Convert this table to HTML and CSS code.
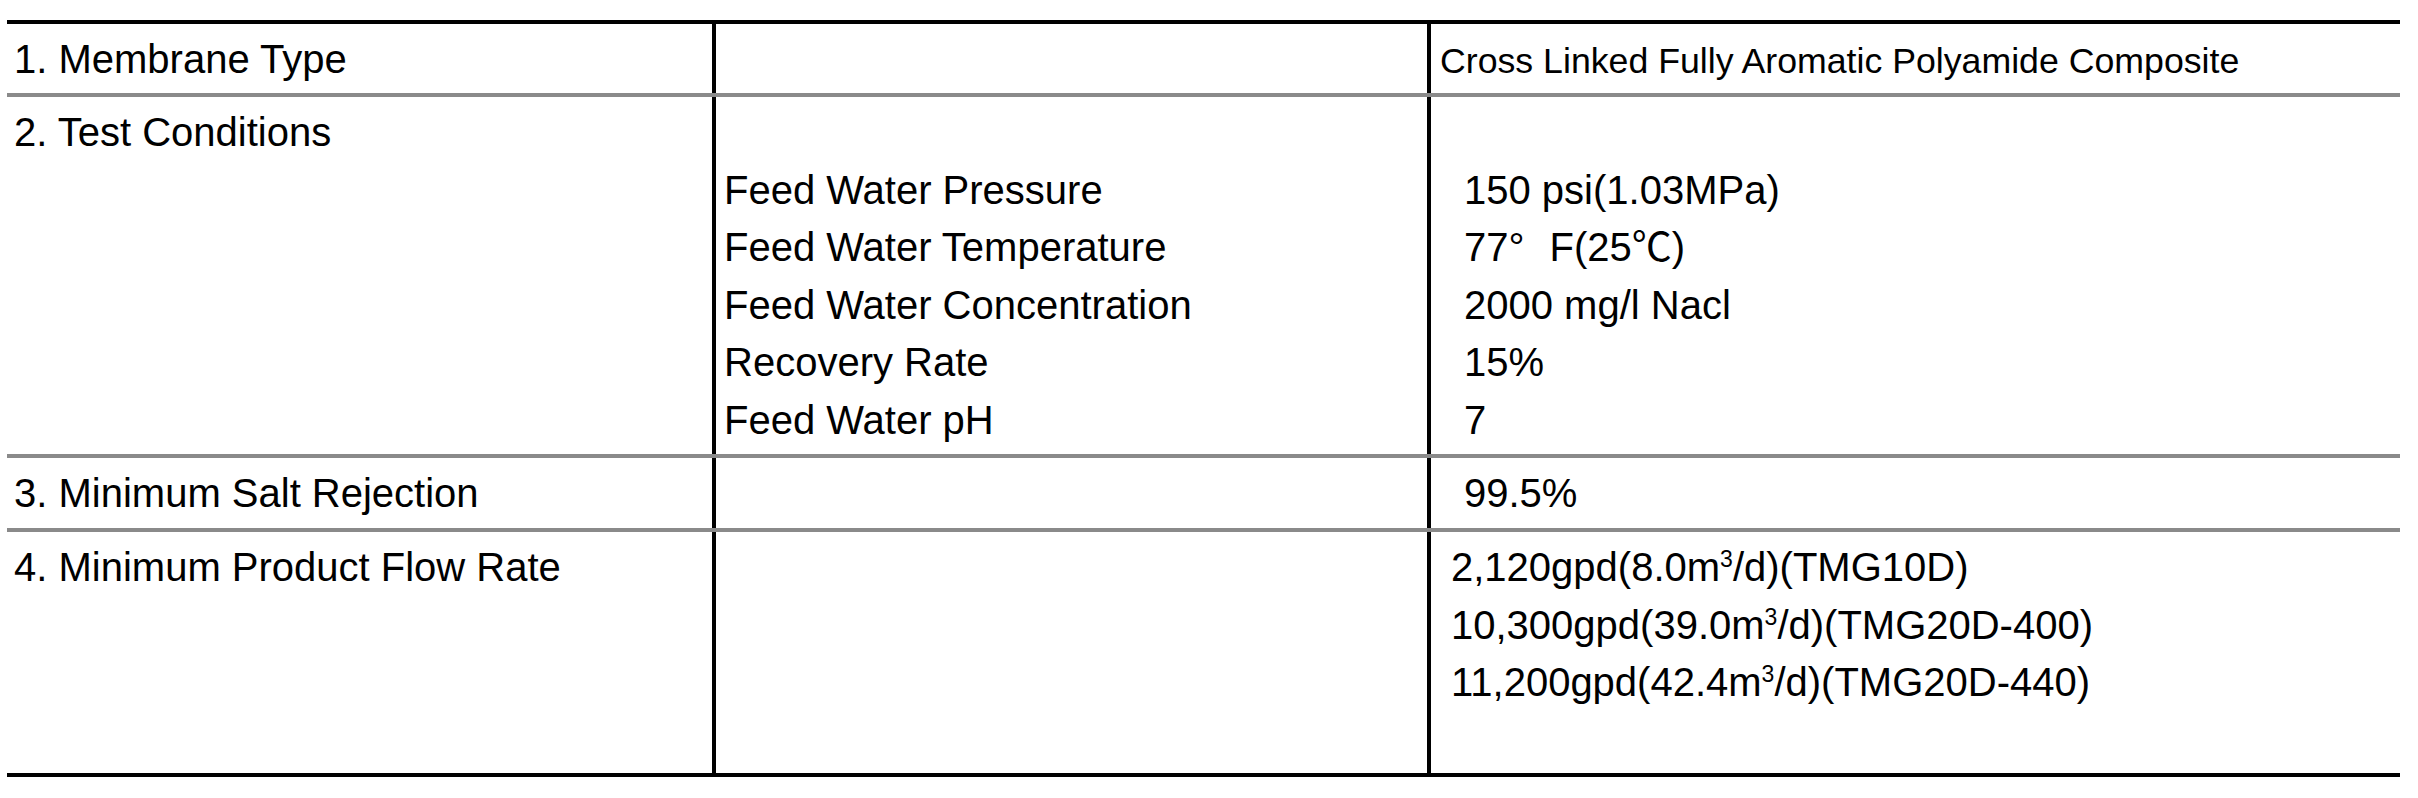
FILE: index.html
```html
<!DOCTYPE html>
<html lang="en">
<head>
<meta charset="utf-8">
<title>Membrane Specification</title>
<link rel="stylesheet" href="styles.css">
</head>
<body>
<div class="sheet">
  <div class="spec">
    <div class="row r1">
      <div class="cell c1">1. Membrane Type</div>
      <div class="cell c2"></div>
      <div class="cell c3"><span class="small">Cross Linked Fully Aromatic Polyamide Composite</span></div>
    </div>
    <div class="row r2">
      <div class="cell c1">2. Test Conditions</div>
      <div class="cell c2 lead">
        <div>Feed Water Pressure</div>
        <div>Feed Water Temperature</div>
        <div>Feed Water Concentration</div>
        <div>Recovery Rate</div>
        <div>Feed Water pH</div>
      </div>
      <div class="cell c3 lead">
        <div class="ind2">150 psi(1.03MPa)</div>
        <div class="ind2">77<span class="deg">°</span>F(25<span class="cjk">℃</span>)</div>
        <div class="ind2">2000 mg/l Nacl</div>
        <div class="ind2">15%</div>
        <div class="ind2">7</div>
      </div>
    </div>
    <div class="row r3">
      <div class="cell c1">3. Minimum Salt Rejection</div>
      <div class="cell c2"></div>
      <div class="cell c3"><div class="ind2">99.5%</div></div>
    </div>
    <div class="row r4">
      <div class="cell c1">4. Minimum Product Flow Rate</div>
      <div class="cell c2"></div>
      <div class="cell c3">
        <div class="ind1">2,120gpd(8.0m<span class="sup">3</span>/d)(TMG10D)</div>
        <div class="ind1">10,300gpd(39.0m<span class="sup">3</span>/d)(TMG20D-400)</div>
        <div class="ind1">11,200gpd(42.4m<span class="sup">3</span>/d)(TMG20D-440)</div>
      </div>
    </div>
  </div>
</div>
</body>
</html>
```

FILE: styles.css
```css
html, body {
  margin: 0;
  padding: 0;
  background: #fff;
}

body {
  font-family: "Liberation Sans", Arial, "Noto Sans CJK SC", sans-serif;
  color: #000;
}

.sheet {
  padding: 20px 18px 0 7px;
}

.spec {
  border-top: 4px solid #000;
  border-bottom: 4px solid #000;
}

.row {
  display: grid;
  grid-template-columns: 709px 715px 1fr;
}

.row + .row {
  border-top: 4px solid #8a8a8a;
}

.r1 { height: 69px; }
.r2 { height: 357px; }
.r3 { height: 70px; }
.r4 { height: 241px; }

.cell {
  padding: 7px 0 0 7px;
  font-size: 40px;
  line-height: 57.5px;
  white-space: nowrap;
}

.c1,
.c2 {
  border-right: 4px solid #000;
}

.c2 {
  padding-left: 8px;
}

.c3 {
  padding-left: 9px;
}

.lead {
  padding-top: 64.5px;
}

.small {
  font-size: 35.7px;
}

.ind1 {
  padding-left: 11px;
}

.ind2 {
  padding-left: 24px;
}

.deg {
  display: inline-block;
  width: 41px;
}

.cjk {
  font-family: "Noto Sans CJK SC", sans-serif;
  line-height: 0;
}

.sup {
  font-size: 23px;
  vertical-align: 14px;
  line-height: 0;
}
```
